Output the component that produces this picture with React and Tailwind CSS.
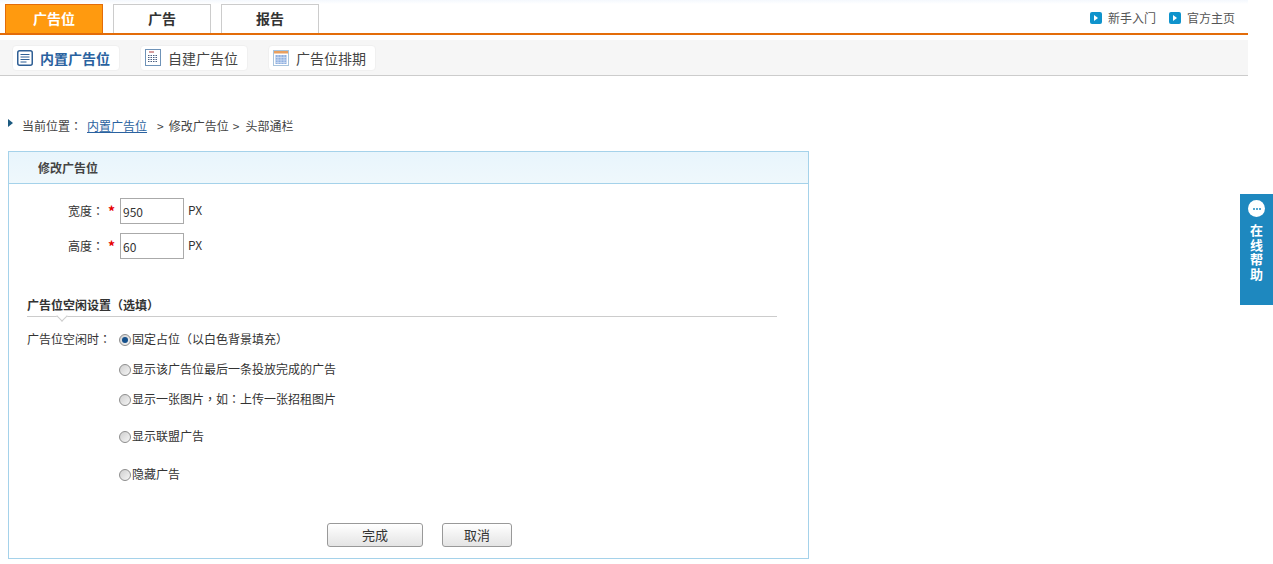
import { useState } from "react";

const font = { fontFamily: '"Noto Sans CJK SC", "Liberation Sans", sans-serif' };

const tabs = ["广告位", "广告", "报告"];

// centred full-width punctuation, as the reference draws it
function P({ children }) {
  return <span className="font-['Noto_Sans_CJK_TC']">{children}</span>;
}

const radios = [
  { label: <>固定占位<P>（</P>以白色背景填充<P>）</P></>, cls: "h-[30px]" },
  { label: "显示该广告位最后一条投放完成的广告", cls: "h-[30px]" },
  { label: <>显示一张图片<P>，</P>如<P>：</P>上传一张招租图片</>, cls: "h-[37px]" },
  { label: "显示联盟广告", cls: "h-[38px]" },
  { label: "隐藏广告", cls: "h-[20px]" },
];

function ListIcon() {
  return (
    <svg width="16" height="16" viewBox="0 0 16 16" fill="none">
      <rect x="0.75" y="0.75" width="14.5" height="14.5" rx="2" stroke="#2f5f95" strokeWidth="1.5" />
      <path d="M3.5 4.5h9M3.5 7h9M3.5 9.5h9M3.5 12h6" stroke="#2f5f95" strokeWidth="1" />
    </svg>
  );
}

function SheetIcon() {
  return (
    <svg width="16" height="17" viewBox="0 0 16 17" fill="none">
      <rect x="0.5" y="0.5" width="15" height="16" fill="#fff" stroke="#6f93b8" />
      <path d="M4 3h5" stroke="#b03a3a" strokeWidth="1" />
      <path d="M3 6.5h10M3 8.5h10M3 10.5h10M3 12.5h10" stroke="#4a5f80" strokeWidth="1" strokeDasharray="1.5 1" />
    </svg>
  );
}

function CalendarIcon() {
  return (
    <svg width="16" height="16" viewBox="0 0 16 16" fill="none">
      <rect x="0.5" y="0.5" width="15" height="15" fill="#fff" stroke="#a9c4dc" />
      <rect x="1" y="1" width="14" height="2.5" fill="#e9a060" />
      <rect x="2.5" y="5" width="11" height="9" fill="#8fb0e0" />
      <path d="M2.5 7.5h11M2.5 10h11M2.5 12.5h11M5 5v9M8 5v9M11 5v9" stroke="#d5e2f5" strokeWidth="0.7" />
    </svg>
  );
}

function Radio({ checked, onSelect }) {
  return (
    <button
      type="button"
      onClick={onSelect}
      className="flex h-3 w-3 shrink-0 items-center justify-center rounded-full border border-[#8d8d8d] bg-gradient-to-br from-[#cfcfcf] to-[#f6f6f6]"
    >
      {checked && <span className="h-[6px] w-[6px] rounded-full bg-[#14508c]" />}
    </button>
  );
}

export default function App() {
  const [active, setActive] = useState(0);

  return (
    <div className="relative h-[564px] overflow-hidden bg-white text-[12px] leading-[16px] text-[#333]" style={font}>
      <div className="w-[1248px]">
        <div className="h-[4px] bg-gradient-to-b from-[#f4f8fd] to-white" />

        <div className="flex h-[31px] items-stretch justify-between border-b-2 border-[#e36c09] pl-[5px]">
          <div className="flex gap-[10px]">
            {tabs.map((t, i) =>
              i === 0 ? (
                <div
                  key={t}
                  className="flex w-[98px] items-center justify-center border border-b-0 border-[#e36c09] bg-[#ff9a0f] pb-[2px] text-[14px] font-bold text-white"
                >
                  {t}
                </div>
              ) : (
                <div
                  key={t}
                  className="flex w-[98px] items-center justify-center border border-b-0 border-[#ccc] bg-white pb-[2px] text-[14px] font-bold text-[#333]"
                >
                  {t}
                </div>
              )
            )}
          </div>
          <div className="flex items-center gap-[13px] pr-[13px] pb-[2px] text-[#555]">
            <span className="flex items-center gap-[6px]">
              <span className="flex h-3 w-3 items-center justify-center rounded-[2px] bg-[#0f93cc]">
                <span className="h-0 w-0 border-y-[3px] border-l-[4px] border-y-transparent border-l-white" />
              </span>
              新手入门
            </span>
            <span className="flex items-center gap-[6px]">
              <span className="flex h-3 w-3 items-center justify-center rounded-[2px] bg-[#0f93cc]">
                <span className="h-0 w-0 border-y-[3px] border-l-[4px] border-y-transparent border-l-white" />
              </span>
              官方主页
            </span>
          </div>
        </div>

        <div className="mt-[5px] flex h-[36px] items-center gap-5 border-b border-[#ccc] bg-[#f6f6f6] pl-[12px]">
          <div className="flex h-[26px] w-[108px] shrink-0 items-center gap-[7px] rounded-[4px] border border-[#f0f0f0] bg-white pl-[4px] text-[14px] font-bold text-[#2a62a0]">
            <ListIcon />
            内置广告位
          </div>
          <div className="flex h-[26px] w-[108px] shrink-0 items-center gap-[7px] rounded-[4px] border border-[#f0f0f0] bg-white pl-[4px] text-[14px] text-[#444]">
            <SheetIcon />
            自建广告位
          </div>
          <div className="flex h-[26px] w-[108px] shrink-0 items-center gap-[7px] rounded-[4px] border border-[#f0f0f0] bg-white pl-[4px] text-[14px] text-[#444]">
            <CalendarIcon />
            广告位排期
          </div>
        </div>
      </div>

      <div className="mt-[42px] flex h-[16px] items-center pl-[8px] text-[#444]">
        <span className="mb-[6px] h-0 w-0 border-y-[4px] border-l-[5px] border-y-transparent border-l-[#1c5a80]" />
        <span className="ml-[9px]">当前位置<P>：</P></span>
        <a className="ml-[5px] text-[#2a62a0] underline">内置广告位</a>
        <span className="ml-[10px]">&gt;</span>
        <span className="ml-[5px]">修改广告位</span>
        <span className="ml-[4px]">&gt;</span>
        <span className="ml-[6px]">头部通栏</span>
      </div>

      <div className="ml-[8px] mt-[17px] h-[408px] w-[801px] border border-[#a5d2ea]">
        <div className="flex h-[32px] items-center border-b border-[#a5d2ea] bg-gradient-to-b from-[#e8f5fc] to-[#eff8fc] pl-[29px] font-bold text-[#444]">
          修改广告位
        </div>

        <div className="pl-[59px] pt-[14px]">
          <div className="flex h-[26px] items-center">
            <span className="w-[40px]">宽度<P>：</P></span>
            <span className="w-[12px] text-[14px] font-bold text-[#e60000]">*</span>
            <input
              defaultValue="950"
              className="h-[26px] w-[64px] border border-[#aaa] pl-[2px] text-[12px] text-[#333] outline-none"
            />
            <span className="mb-[3px] ml-[4px]">PX</span>
          </div>
          <div className="mt-[9px] flex h-[26px] items-center">
            <span className="w-[40px]">高度<P>：</P></span>
            <span className="w-[12px] text-[14px] font-bold text-[#e60000]">*</span>
            <input
              defaultValue="60"
              className="h-[26px] w-[64px] border border-[#aaa] pl-[2px] text-[12px] text-[#333] outline-none"
            />
            <span className="mb-[3px] ml-[4px]">PX</span>
          </div>
        </div>

        <div className="relative ml-[18px] mt-[37px] h-[21px] w-[750px] border-b border-[#ccc] pt-px font-bold text-[#333]">
          广告位空闲设置<P>（</P>选填<P>）</P>
          <span className="absolute left-[31px] top-[16px] h-[8px] w-[8px] rotate-45 border-b border-r border-[#ccc] bg-white" />
        </div>

        <div className="ml-[18px] mt-[14px] flex">
          <div className="w-[92px] shrink-0">广告位空闲时<P>：</P></div>
          <div>
            {radios.map((r, i) => (
              <label key={i} className={`flex items-start gap-px ${r.cls}`}>
                <span className="mt-[3px]">
                  <Radio checked={active === i} onSelect={() => setActive(i)} />
                </span>
                <span>{r.label}</span>
              </label>
            ))}
          </div>
        </div>

        <div className="ml-[318px] mt-[37px] flex gap-[19px]">
          <button className="h-[24px] w-[96px] rounded-[3px] border border-[#999] bg-gradient-to-b from-white to-[#e4e4e4] text-[13px] text-[#333]">
            完成
          </button>
          <button className="h-[24px] w-[70px] rounded-[3px] border border-[#999] bg-gradient-to-b from-white to-[#e4e4e4] text-[13px] text-[#333]">
            取消
          </button>
        </div>
      </div>

      <div className="absolute left-[1240px] top-[194px] flex h-[111px] w-[33px] flex-col items-center bg-[#1e88bf] pt-[6px] text-white">
        <span className="flex h-[17px] w-[17px] items-center justify-center gap-px rounded-full bg-white">
          <span className="h-[2px] w-[2px] rounded-full bg-[#1e88bf]" />
          <span className="h-[2px] w-[2px] rounded-full bg-[#1e88bf]" />
          <span className="h-[2px] w-[2px] rounded-full bg-[#1e88bf]" />
        </span>
        <span className="mt-[6px] w-[13px] text-[13px] font-bold leading-[14.5px]">在线帮助</span>
      </div>
    </div>
  );
}
